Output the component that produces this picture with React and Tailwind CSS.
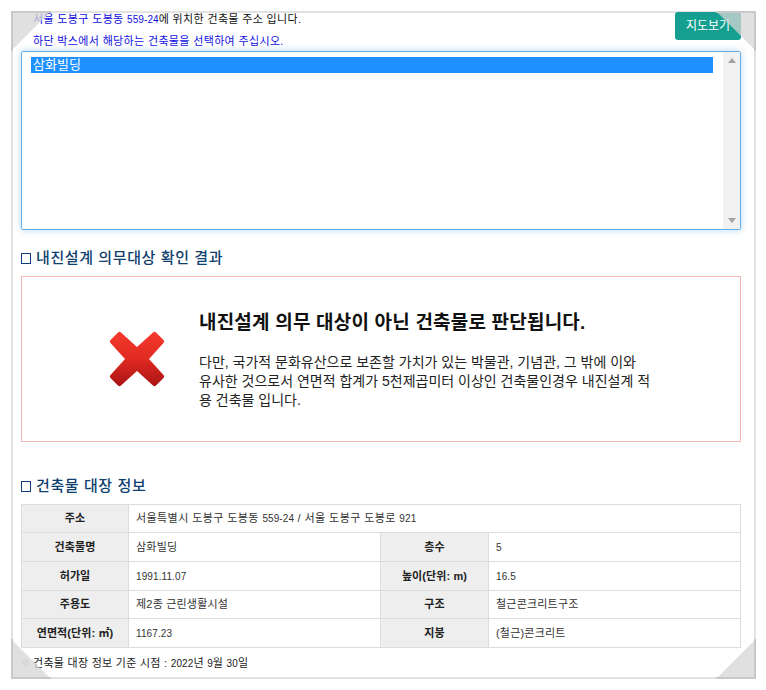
import React from "react";

const FONT = "font-['Liberation_Sans','Noto_Sans_CJK_KR',sans-serif]";

function Fold({ className, points, edges }) {
  return (
    <svg className={`pointer-events-none absolute h-[40px] w-[40px] ${className}`} viewBox="0 0 40 40">
      <polygon points={points} fill="#d6d6d6" fillOpacity="0.75" />
      <polyline points={edges} fill="none" stroke="#c8c8c8" strokeWidth="2" />
    </svg>
  );
}

function Heading({ children, className = "" }) {
  return (
    <h3 className={`flex items-center gap-[5px] text-[15px] leading-[20px] font-medium tracking-[0.6px] text-[#0f3f6f] ${className}`}>
      <span className="h-[11px] w-[10px] border border-[#0f3f7f]" />
      {children}
    </h3>
  );
}

function Num({ children }) {
  return <span className="text-[10px] tracking-[0.1px]">{children}</span>;
}

function Th({ children }) {
  return <th className="border border-[#dddddd] bg-[#eeeeee] p-0 text-center text-[11px] font-bold tracking-[0.1px] text-[#222222]">{children}</th>;
}

function Td({ children, colSpan }) {
  return <td colSpan={colSpan} className="border border-[#dddddd] px-[7px] py-0 text-left text-[11px] tracking-[0.2px] text-[#333333]">{children}</td>;
}

function CrossIcon() {
  return (
    <svg width="56" height="56" viewBox="0 0 56 56">
      <defs>
        <linearGradient id="crossFill" x1="0" y1="0" x2="0" y2="1">
          <stop offset="0" stopColor="#f53a2b" />
          <stop offset="0.5" stopColor="#e02a22" />
          <stop offset="1" stopColor="#a81414" />
        </linearGradient>
      </defs>
      <path
        d="M9 1.500 Q10.500 0 12 1.500 L28 16 L44 1.500 Q45.500 0 47 1.500 L54.500 9 Q56 10.500 54.500 12 L40 28 L54.500 44 Q56 45.500 54.500 47 L47 54.500 Q45.500 56 44 54.500 L28 40 L12 54.500 Q10.500 56 9 54.500 L1.500 47 Q0 45.500 1.500 44 L16 28 L1.500 12 Q0 10.500 1.500 9 Z"
        fill="url(#crossFill)"
      />
    </svg>
  );
}

export default function App() {
  return (
    <div className={`h-[690px] w-[766px] overflow-hidden bg-white pt-[11px] pl-[11px] ${FONT}`}>
      <div className="relative flex h-[668px] w-[745px] flex-col border-t-2 border-r-2 border-b-2 border-l-2 border-[#e2e2e2] pr-[13px] pl-[8px]">
        <div className="-mt-px flex items-start justify-between">
          <div className="pt-[1px] pl-[12px] text-[11px] tracking-[0.35px] text-[#1010e0]">
            <p className="h-[12px] leading-[12px]">
              서울 도봉구 도봉동 <Num>559-24</Num><span className="text-[#111111]">에 위치한 건축물 주소 입니다.</span>
            </p>
            <p className="mt-[10px] h-[12px] leading-[12px]">하단 박스에서 해당하는 건축물을 선택하여 주십시오.</p>
          </div>
          <button className="flex h-[28px] w-[66px] items-center justify-center rounded-[3px] bg-[#149f91] text-[12px] text-white">
            지도보기
          </button>
        </div>

        <div className="mt-[4px] flex h-[179px] rounded-[2px] border border-[#66afe9] shadow-[0_0_6px_rgba(102,175,233,0.5)]">
          <div className="flex-1 pt-[5px] pr-[10px] pl-[9px]">
            <div className="h-[16px] bg-[#1e90ff] pl-[2px] text-[13px] leading-[16px] text-white">삼화빌딩</div>
          </div>
          <div className="flex w-[17px] flex-col items-center justify-between bg-[#f1f1f1] py-[6px]">
            <span className="h-0 w-0 border-r-[4px] border-b-[5px] border-l-[4px] border-r-transparent border-b-[#a3a3a3] border-l-transparent" />
            <span className="h-0 w-0 border-t-[5px] border-r-[4px] border-l-[4px] border-t-[#a3a3a3] border-r-transparent border-l-transparent" />
          </div>
        </div>

        <Heading className="mt-[18px]">내진설계 의무대상 확인 결과</Heading>

        <div className="mt-[8px] flex h-[166px] items-center border border-[#f2b8b8] pl-[87px]">
          <CrossIcon />
          <div className="ml-[34px] w-[453px] pt-[1px]">
            <p className="text-[19px] leading-[26px] font-bold tracking-[0.2px] text-[#111111]">내진설계 의무 대상이 아닌 건축물로 판단됩니다.</p>
            <p className="mt-[17px] text-[14px] leading-[19px] text-[#222222]">
              다만, 국가적 문화유산으로 보존할 가치가 있는 박물관, 기념관, 그 밖에 이와 유사한 것으로서 연면적 합계가 5천제곱미터 이상인 건축물인경우 내진설계 적용 건축물 입니다.
            </p>
          </div>
        </div>

        <Heading className="mt-[34px]">건축물 대장 정보</Heading>

        <table className="mt-[8px] w-[719px] table-fixed border-collapse">
          <colgroup>
            <col className="w-[107px]" />
            <col className="w-[252px]" />
            <col className="w-[108px]" />
            <col className="w-[252px]" />
          </colgroup>
          <tbody>
            <tr className="h-[28px]"><Th>주소</Th><Td colSpan={3}><span className="tracking-[0.42px]">서울특별시 도봉구 도봉동 <Num>559-24</Num> / 서울 도봉구 도봉로 <Num>921</Num></span></Td></tr>
            <tr className="h-[29px]"><Th>건축물명</Th><Td>삼화빌딩</Td><Th>층수</Th><Td><Num>5</Num></Td></tr>
            <tr className="h-[29px]"><Th>허가일</Th><Td><Num>1991.11.07</Num></Td><Th>높이(단위: m)</Th><Td><Num>16.5</Num></Td></tr>
            <tr className="h-[28px]"><Th>주용도</Th><Td>제2종 근린생활시설</Td><Th>구조</Th><Td>철근콘크리트구조</Td></tr>
            <tr className="h-[29px]"><Th>연면적(단위: ㎡)</Th><Td><Num>1167.23</Num></Td><Th>지붕</Th><Td>(철근)콘크리트</Td></tr>
          </tbody>
        </table>

        <p className="mt-[8px] flex text-[11px] leading-[14px] tracking-[0.28px] text-[#222222]">
          <span className="w-[12px] text-[9px] text-[#999999]">※</span>
          <span>건축물 대장 정보 기준 시점 : <Num>2022</Num>년 <Num>9</Num>월 <Num>30</Num>일</span>
        </p>

        <Fold className="top-[-2px] left-[-2px]" points="0,0 40,0 0,40" edges="40,1 1,1 1,40" />
        <Fold className="top-[-2px] right-[-2px]" points="0,0 40,0 40,40" edges="0,1 39,1 39,40" />
        <Fold className="bottom-[-2px] left-[-2px]" points="0,0 40,40 0,40" edges="1,0 1,39 40,39" />
        <Fold className="right-[-2px] bottom-[-2px]" points="40,0 40,40 0,40" edges="39,0 39,39 0,39" />
      </div>
    </div>
  );
}
